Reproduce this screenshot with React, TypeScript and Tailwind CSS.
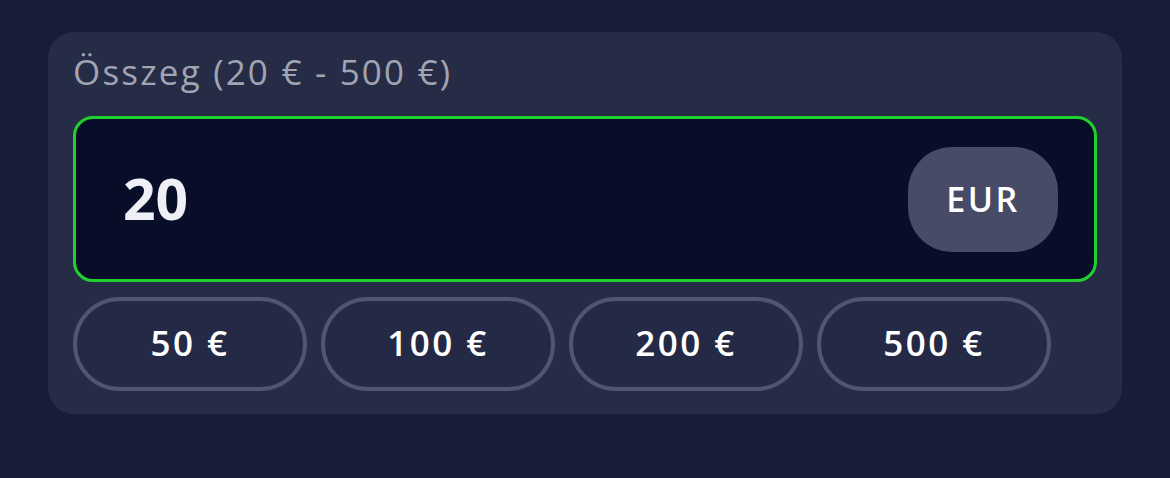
const PRESETS = ['50 €', '100 €', '200 €', '500 €']

export default function App() {
  return (
    <div
      className="h-[478px] w-[1170px] bg-[#171d38] pl-[48px] pt-[32px]"
      style={{ fontFamily: '"Open Sans", "Noto Sans", sans-serif' }}
    >
      <div className="flex h-[382px] w-[1074px] flex-col rounded-[26px] bg-[#262c46] px-[25px] pt-[13px]">
        <label className="h-[54px] text-[35px] leading-[54px] tracking-[2.2px] text-[#a0a4b3]">
          Összeg (20 € - 500 €)
        </label>
        <div className="mt-[17px] flex h-[166px] items-center justify-between rounded-[20px] border-[3px] border-[#20d02e] bg-[#080e28] pl-[47px] pr-[36px]">
          <span className="text-[57px] font-bold text-[#eef0f5]">20</span>
          <button className="flex h-[105px] w-[150px] items-center justify-center rounded-[44px] bg-[#474b66] text-[34px] font-semibold tracking-[2.5px] text-white">
            EUR
          </button>
        </div>
        <div className="mt-[15px] flex gap-[14px]">
          {PRESETS.map((p) => (
            <button
              key={p}
              className="flex h-[94px] w-[234px] items-center justify-center rounded-full border-[4px] border-[#50566f] bg-[#242a45] pb-[2px] text-[35px] font-semibold tracking-[2.5px] text-white"
            >
              {p}
            </button>
          ))}
        </div>
      </div>
    </div>
  )
}
